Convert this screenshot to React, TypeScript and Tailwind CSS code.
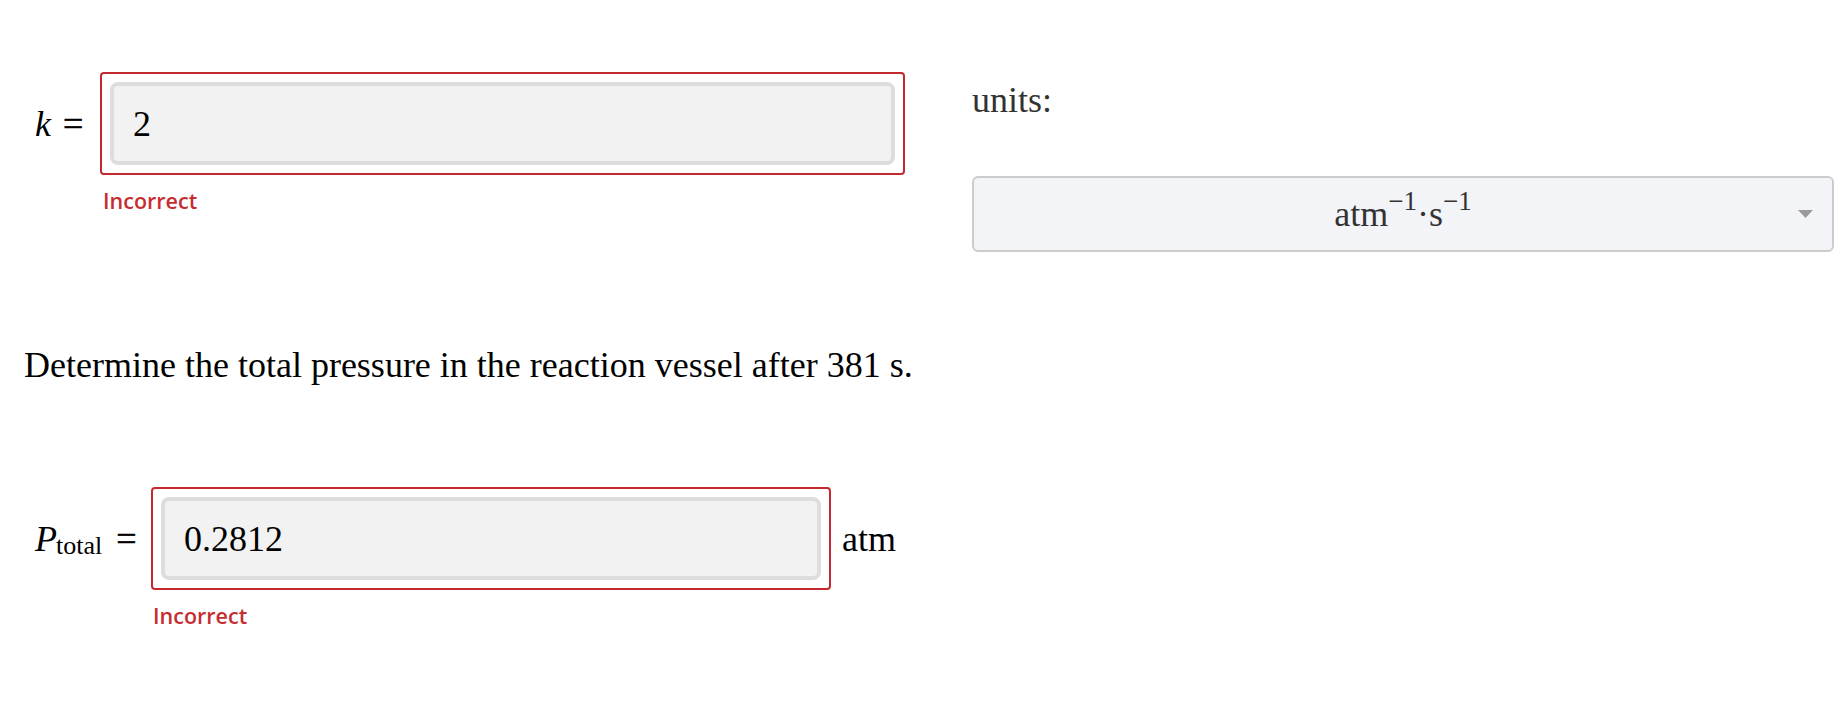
import { ChangeEvent, useState } from "react"

const serif = "font-['Liberation_Serif','Times_New_Roman',serif]"
const sans = "font-['Open_Sans','Liberation_Sans',sans-serif]"

interface AnswerFieldProps {
	value: string
	width: string
}

function AnswerField({ value, width }: AnswerFieldProps) {
	const [text, setText] = useState(value)

	return (
		<div
			className={`${width} rounded-[4px] border-2 border-[#c3282e] bg-white p-[8px]`}
		>
			<input
				value={text}
				onChange={(e: ChangeEvent<HTMLInputElement>) => setText(e.target.value)}
				className={`${serif} block h-[83px] w-full rounded-[8px] border-4 border-[#dddddd] bg-[#f2f2f2] pl-[19px] text-[36px] text-black outline-none`}
			/>
		</div>
	)
}

function Incorrect({ offset }: { offset: string }) {
	return (
		<p
			className={`${sans} ${offset} mt-[12px] text-[21.5px] leading-[28px] font-semibold text-[#c62d30]`}
		>
			Incorrect
		</p>
	)
}

export default function App() {
	return (
		<div className={`${serif} min-h-[715px] bg-white pl-[24px] pt-[72px] text-black`}>
			{/* rate constant + units */}
			<div className="flex items-start">
				<div className="w-[881px]">
					<div className="flex items-center">
						<div className="flex w-[76px] items-center pl-[11px] text-[36px] leading-none">
							<span className="italic">k</span>
							<span className="ml-[12px] [-webkit-text-stroke:0.6px_black]">=</span>
						</div>
						<AnswerField value="2" width="w-[805px]" />
					</div>
					<Incorrect offset="ml-[79px]" />
				</div>

				<div className="ml-[67px] mt-[8px]">
					<p className="text-[36px] leading-[41px] text-[#333333]">units:</p>
					<button className="mt-[55px] flex h-[76px] w-[862px] items-center rounded-[6px] border-2 border-[#cccccc] bg-[#f3f4f8] pr-[19px] text-[#333333]">
						<span className="flex-1 pl-[34px] text-center text-[36px] leading-none">
							atm<sup className="-top-[16px] text-[27px]">−1</sup>·s
							<sup className="-top-[16px] text-[27px]">−1</sup>
						</span>
						<svg width="15" height="8" viewBox="0 0 15 8">
							<path d="M0 0h15L7.5 8z" fill="#9a9a9a" />
						</svg>
					</button>
				</div>
			</div>

			<p className="mt-[93px] text-[36px] leading-[41px]">
				Determine the total pressure in the reaction vessel after 381 s.
			</p>

			{/* total pressure */}
			<div className="mt-[101px]">
				<div className="flex items-center">
					<div className="flex w-[127px] items-center pl-[11px] text-[36px] leading-none">
						<span className="italic">P</span>
						<span className="mt-[14px] -ml-[1px] text-[26px]">total</span>
						<span className="ml-[14px] [-webkit-text-stroke:0.6px_black]">=</span>
					</div>
					<AnswerField value="0.2812" width="w-[680px]" />
					<span className="ml-[11px] text-[36px] leading-none">atm</span>
				</div>
				<Incorrect offset="ml-[129px]" />
			</div>
		</div>
	)
}
